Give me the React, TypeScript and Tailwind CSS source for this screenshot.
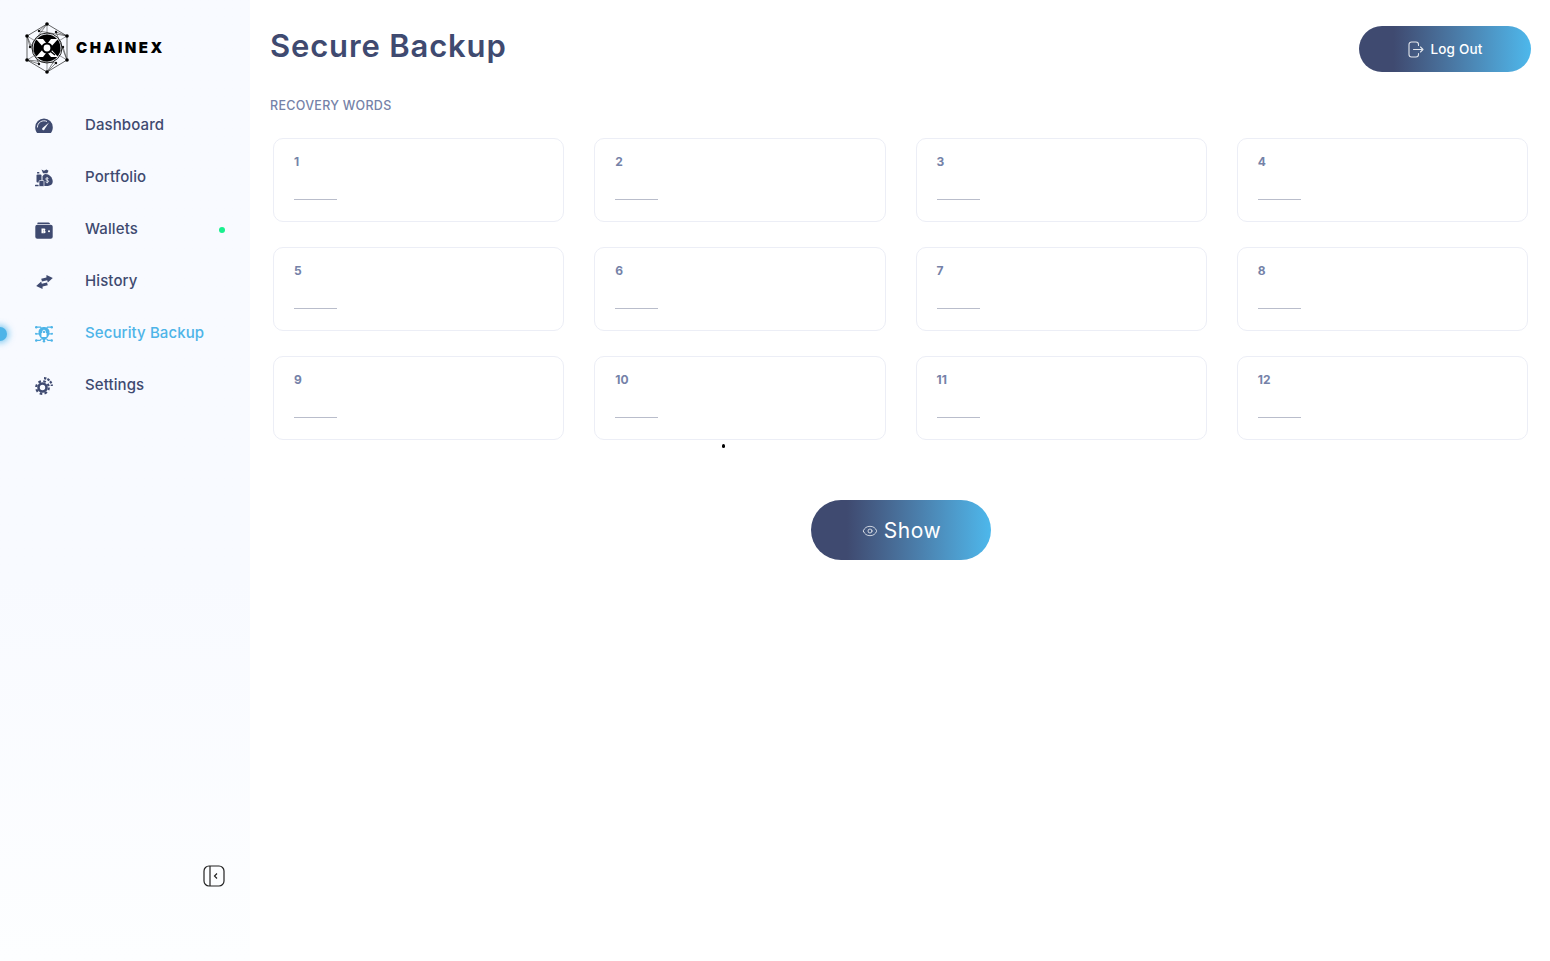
import { Eye } from 'lucide-react';

const font = "font-['Inter','Liberation_Sans',sans-serif]";

function Logo() {
  const outer = [
    [47, 23],
    [67, 35],
    [67, 59],
    [47, 71],
    [27, 59],
    [27, 35],
  ];
  const inner = [
    [39, 30],
    [56, 31],
    [63, 46],
    [56, 62],
    [39, 63],
    [30, 46],
  ];
  return (
    <svg width="50" height="54" viewBox="22 20 50 54" className="shrink-0">
      <polygon
        points={outer.map((p) => p.join(',')).join(' ')}
        fill="none"
        stroke="#222"
        strokeWidth="0.7"
      />
      {outer.map(([x, y], i) => (
        <g key={`${x}-${y}`}>
          <line x1={x} y1={y} x2={inner[i][0]} y2={inner[i][1]} stroke="#333" strokeWidth="0.6" />
          <line
            x1={x}
            y1={y}
            x2={inner[(i + 5) % 6][0]}
            y2={inner[(i + 5) % 6][1]}
            stroke="#333"
            strokeWidth="0.6"
          />
          <line x1={x} y1={y} x2="47" y2="47" stroke="#333" strokeWidth="0.5" />
          <circle cx={x} cy={y} r="1.800" fill="#000" />
        </g>
      ))}
      {inner.map(([x, y]) => (
        <circle key={`${x}-${y}`} cx={x} cy={y} r="1.200" fill="#111" />
      ))}
      <circle cx="47" cy="47" r="15" fill="none" stroke="#222" strokeWidth="1" />
      <circle cx="47" cy="47" r="13.500" fill="#000" />
      <path d="M36 38h7l4 5 4-5h7l-8 9 8 9h-7l-4-5-4 5h-7l8-9z" fill="#fff" />
      <circle cx="47" cy="47" r="4.500" fill="#fff" stroke="#000" strokeWidth="2.200" />
      <path d="M50 50l5 4" stroke="#000" strokeWidth="1.500" />
    </svg>
  );
}

function DashIcon() {
  return (
    <svg width="18" height="16" viewBox="0 0 18 16" fill="#3f4a70">
      <path d="M9 .5A8.800 8.800 0 0 0 .2 9.300c0 2.200.6 4 1.700 5.400a1 1 0 0 0 .8.4h12.600a1 1 0 0 0 .8-.4c1.100-1.400 1.700-3.200 1.700-5.400A8.800 8.800 0 0 0 9 .5z" />
      <path d="M2.400 9.500A6.600 6.600 0 0 1 12 3.500" fill="none" stroke="#f9fbff" strokeWidth="0.900" />
      <path d="M14 4.500 9.700 11a1.300 1.300 0 1 1-1.900-1.200z" fill="#f9fbff" />
    </svg>
  );
}

function PortfolioIcon() {
  return (
    <svg width="18" height="18" viewBox="0 0 18 18" fill="#3f4a70">
      <path d="M6.500.5l2.500 1.300L11.500.5l2 1.300-1.200 2.400H8z" />
      <path d="M10.500 5c3.500 0 7.200 3.500 7.200 7.500 0 3-2.200 4.500-6.700 4.500-2 0-3-.5-3.500-1.500V7.500C8.200 6 9.200 5 10.500 5z" />
      <rect x="2" y="3" width="2.400" height="1.400" rx="0.500" />
      <rect x="1.500" y="5.500" width="5" height="8" rx="1" />
      <rect x="4" y="11.500" width="5" height="6" rx="1" stroke="#f9fbff" strokeWidth="0.700" />
      <rect x="0" y="15.800" width="3.600" height="1.500" rx="0.500" />
      <path
        d="M13.500 9.500c-.5-.7-2.800-.9-2.800.5s2.900.9 2.900 2.300-2.400 1.300-3 .5M12.200 8.300v6"
        fill="none"
        stroke="#f9fbff"
        strokeWidth="0.800"
      />
    </svg>
  );
}

function WalletIcon() {
  return (
    <svg width="18" height="17" viewBox="0 0 18 17">
      <path d="M3 .5h10.500A1.500 1.500 0 0 1 15 2H2.500A1 1 0 0 1 3 .5z" fill="#3f4a70" />
      <rect x="0.300" y="2.800" width="17.400" height="14" rx="2" fill="#3f4a70" />
      <path d="M6.500 6.500h2.700c1.500 0 1.500 2 .5 2.300 1.300.2 1.300 2.500-.5 2.500H6.500zM8 7.700v.7h1M8 9.500v.7h1" fill="#fff" fillRule="evenodd" />
      <rect x="13" y="8.300" width="2" height="2" rx="1" fill="#fff" />
    </svg>
  );
}

function HistoryIcon() {
  return (
    <svg width="17" height="14" viewBox="0 0 17 14" fill="#3f4a70">
      <path d="M10.500 0l6.300 3.100-5 4.400-.6-2.200-5.200 1.300-.8-2.900 5.200-1.300z" />
      <path d="M6.500 14 .2 10.900l5-4.400.6 2.200L11 7.400l.8 2.900-5.200 1.300z" />
    </svg>
  );
}

function SecurityIcon() {
  return (
    <svg width="19" height="18" viewBox="0 0 19 18" fill="#4db4e8">
      <path d="M9.500 1.500c3.200 0 5.800 2.300 5.800 5.500 0 4-2.300 7-5.800 9-3.500-2-5.800-5-5.800-9 0-3.200 2.600-5.500 5.800-5.500z" />
      <rect x="6.800" y="8" width="5.400" height="4.200" rx="0.500" fill="#fff" />
      <path d="M8 8V6.500a1.500 1.500 0 0 1 3 0V8" fill="none" stroke="#fff" strokeWidth="0.900" />
      <circle cx="1.300" cy="1.800" r="1.300" />
      <circle cx="17.700" cy="1.800" r="1.300" />
      <circle cx="1.300" cy="15.800" r="1.300" />
      <circle cx="17.700" cy="15.800" r="1.300" />
      <circle cx="9.500" cy="16.700" r="1.300" />
      <circle cx="1" cy="8.800" r="1" />
      <circle cx="18" cy="8.800" r="1" />
      <path
        d="M1.300 1.800h4.500l1 1M17.700 1.800h-4.500l-1 1M1.300 15.800h4l1.500-1.500M17.700 15.800h-4l-1.500-1.500M1 8.800h4M18 8.800h-4"
        stroke="#4db4e8"
        strokeWidth="1.200"
        fill="none"
      />
    </svg>
  );
}

function SettingsIcon() {
  return (
    <svg width="18" height="18" viewBox="0 0 18 18" fill="none" stroke="#3f4a70">
      <circle cx="7.500" cy="10.500" r="4" strokeWidth="2.600" />
      <circle cx="7.500" cy="10.500" r="6.300" strokeWidth="2.200" strokeDasharray="2.600 2.350" />
      <path d="M9 1.200a8 8 0 0 1 7.800 7.800" strokeWidth="2.200" strokeDasharray="2.400 1.100" />
    </svg>
  );
}

function LogOutIcon() {
  return (
    <svg width="17" height="17" viewBox="0 0 17 17" fill="none" stroke="#fff" strokeWidth="1.100" strokeLinecap="round" strokeLinejoin="round" opacity="0.85">
      <path d="M11.500 4.500V3.500A2.500 2.500 0 0 0 9 1H4.500A2.500 2.500 0 0 0 2 3.500v10A2.500 2.500 0 0 0 4.500 16H9a2.500 2.500 0 0 0 2.500-2.500v-1" />
      <path d="M6.500 8.500h9.500M13.500 6l2.500 2.500-2.500 2.500" />
    </svg>
  );
}

const navItems = [
  { label: 'Dashboard', icon: <DashIcon /> },
  { label: 'Portfolio', icon: <PortfolioIcon /> },
  { label: 'Wallets', icon: <WalletIcon />, dot: true },
  { label: 'History', icon: <HistoryIcon /> },
  { label: 'Security Backup', icon: <SecurityIcon />, active: true },
  { label: 'Settings', icon: <SettingsIcon /> },
];

function NavItem({ item }: { item: (typeof navItems)[number] }) {
  return (
    <div className="relative flex h-[52px] items-center pl-[35px] pr-[25px]">
      {item.active && (
        <span className="absolute left-[-7px] top-[20px] h-[14px] w-[14px] rounded-full bg-[#4db4e8] shadow-[0_0_6px_2px_rgba(77,180,232,0.7)]" />
      )}
      <span className="mt-[2px] flex w-[18px] justify-center">{item.icon}</span>
      <span
        className={`ml-8 mt-px text-[15px] font-medium tracking-[0.1px] ${
          item.active ? 'text-[#4db4e8]' : 'text-[#3f4a70]'
        }`}
      >
        {item.label}
      </span>
      {item.dot && (
        <span className="ml-auto mt-[2px] h-[6px] w-[6px] rounded-full bg-[#19f08e]" />
      )}
    </div>
  );
}

function Sidebar() {
  return (
    <aside className="flex h-full w-[250px] shrink-0 flex-col overflow-hidden bg-gradient-to-b from-[#f8faff] from-60% to-[#fdfeff]">
      <div className="flex h-[99px] items-center pb-[4px] pl-[22px]">
        <Logo />
        <span className="ml-[4px] mt-[2px] text-[15px] font-black tracking-[2.500px] text-black">
          CHAINEX
        </span>
      </div>
      <nav className="flex flex-col">
        {navItems.map((item) => (
          <NavItem key={item.label} item={item} />
        ))}
      </nav>
      <div className="mt-auto flex justify-end pb-[74px] pr-[25px]">
        <svg width="22" height="22" viewBox="0 0 22 22" fill="none" stroke="#222" strokeWidth="1.200">
          <rect x="1" y="1" width="20" height="20" rx="5" />
          <path d="M7 1v20" />
          <path d="M14 8.500 11.500 11l2.500 2.500" />
        </svg>
      </div>
    </aside>
  );
}

function WordCard({ n }: { n: number }) {
  return (
    <div className="h-[84px] rounded-[10px] border border-[#eceef6] bg-white pl-5 pt-[16px]">
      <p className="h-[14px] text-[12px] leading-[14px] font-bold text-[#7582a8]">{n}</p>
      <div className="mt-[30px] h-px w-[43px] bg-[#b9bdcb]" />
    </div>
  );
}

export default function App() {
  return (
    <div className={`flex h-[961px] w-[1550px] overflow-hidden bg-white ${font}`}>
      <Sidebar />
      <main className="relative flex-1 pl-5 pr-[19px]">
        <header className="flex h-[92px] items-center justify-between">
          <h1 className="text-[31px] font-semibold tracking-[0.85px] text-[#3f4a70]">
            Secure Backup
          </h1>
          <button className="mt-[6px] flex h-[46px] w-[172px] items-center justify-center gap-[6px] rounded-full bg-gradient-to-r from-[#3f4a70] from-20% to-[#4db8ec] text-[13.500px] font-medium tracking-[0.2px] text-white">
            <LogOutIcon />
            Log Out
          </button>
        </header>
        <p className="mt-[6px] text-[12.500px] leading-4 font-medium tracking-[0.3px] text-[#7582a8]">
          RECOVERY WORDS
        </p>
        <div className="mx-[3px] mt-[24px] grid grid-cols-4 gap-x-[30px] gap-y-[25px]">
          {Array.from({ length: 12 }, (_, i) => (
            <WordCard key={i} n={i + 1} />
          ))}
        </div>
        <span className="absolute left-[472px] top-[444px] h-[4px] w-[3px] rounded-full bg-black" />
        <div className="mt-[60px] flex justify-center">
          <button className="flex h-[60px] w-[180px] items-center justify-center gap-[6px] rounded-full bg-gradient-to-r from-[#3f4a70] from-20% to-[#4db8ec] pl-[2px] pt-[1px] text-[21px] tracking-[0.5px] text-white">
            <Eye size={16} strokeWidth={1.100} />
            Show
          </button>
        </div>
      </main>
    </div>
  );
}
